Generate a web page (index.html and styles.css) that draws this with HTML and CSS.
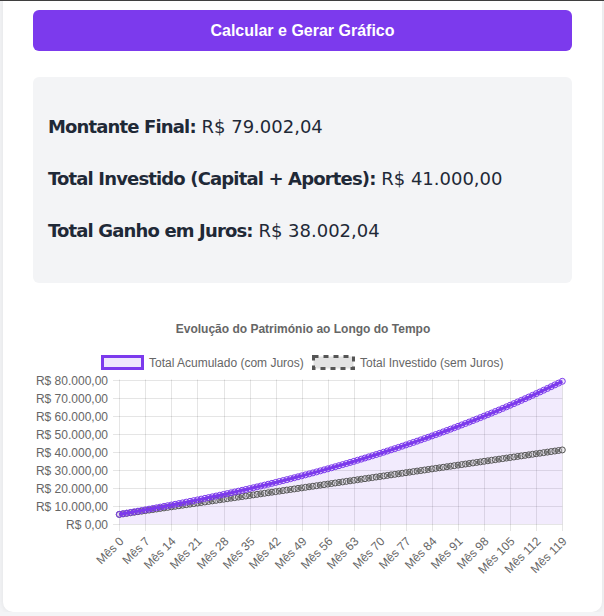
FILE: index.html
```html
<!DOCTYPE html>
<html lang="pt">
<head>
  <meta charset="UTF-8">
  <title>Simulador de Juros Compostos</title>
  <link rel="stylesheet" href="styles.css">
</head>
<body>
  <div id="container">
    <!-- Botão principal -->
    <button id="calc-button">Calcular e Gerar Gráfico</button>

    <!-- Resultados -->
    <div class="results">
      <p><strong>Montante Final:</strong> R$ 79.002,04</p>
      <p><strong>Total Investido (Capital + Aportes):</strong> R$ 41.000,00</p>
      <p><strong>Total Ganho em Juros:</strong> R$ 38.002,04</p>
    </div>

    <!-- Gráfico -->
    <div class="chart-box">
      <svg id="chart" width="540" height="300" viewBox="33 300 540 300"></svg>
    </div>
  </div>

  <script>
    (function () {
      const NS = 'http://www.w3.org/2000/svg';
      const svg = document.getElementById('chart');

      // mesma simulação que gerou os valores acima
      const capital = 5000, aporte = 300, taxa = 0.009, meses = 120;
      const acumulado = [], investido = [];
      let acc = capital, inv = capital;
      for (let i = 0; i < meses; i++) {
        acc = acc * (1 + taxa) + aporte;
        inv += aporte;
        acumulado.push(acc);
        investido.push(inv);
      }

      // área do gráfico
      const plotLeft = 119.3, plotRight = 562.3, plotTop = 379.5, plotBottom = 524;
      const maxY = 80000;
      const X = i => plotLeft + i * (plotRight - plotLeft) / (meses - 1);
      const Y = v => plotBottom - v * (plotBottom - plotTop) / maxY;

      function el(tag, attrs, text) {
        const node = document.createElementNS(NS, tag);
        for (const k in attrs) node.setAttribute(k, attrs[k]);
        if (text) node.textContent = text;
        svg.appendChild(node);
        return node;
      }

      const fmt = v => 'R$ ' + v.toLocaleString('pt-BR', { minimumFractionDigits: 2 });

      // título e legenda
      el('text', { x: 303, y: 333, class: 'chart-title', 'text-anchor': 'middle' },
         'Evolução do Património ao Longo do Tempo');
      el('rect', { x: 102.5, y: 356.5, width: 40, height: 12, class: 'legend-acc' });
      el('text', { x: 149, y: 366.5, class: 'chart-label' }, 'Total Acumulado (com Juros)');
      el('rect', { x: 313.5, y: 356.5, width: 40, height: 12, class: 'legend-inv' });
      el('text', { x: 360, y: 366.5, class: 'chart-label' }, 'Total Investido (sem Juros)');

      // grade horizontal + rótulos do eixo Y
      for (let v = 0; v <= maxY; v += 10000) {
        const y = Math.round(Y(v)) + 0.5;
        el('line', { x1: 113, x2: plotRight, y1: y, y2: y, class: 'grid' });
        el('text', { x: 108, y: y + 4, class: 'chart-label', 'text-anchor': 'end' },
           fmt(v).replace(/\u00a0/g, ' '));
      }

      // grade vertical + rótulos do eixo X
      for (let i = 0; i < meses; i += 7) {
        const x = Math.round(X(i)) + 0.5;
        el('line', { x1: x, x2: x, y1: plotTop, y2: 531, class: 'grid' });
        el('text', {
          class: 'chart-label', 'text-anchor': 'end', dy: '0.35em',
          transform: `translate(${x + 2}, 539) rotate(-45)`
        }, 'Mês ' + i);
      }

      // área preenchida sob o total acumulado
      const accPts = acumulado.map((v, i) => `${X(i).toFixed(2)},${Y(v).toFixed(2)}`);
      el('polygon', {
        points: accPts.join(' ') + ` ${plotRight},${plotBottom} ${plotLeft},${plotBottom}`,
        class: 'area-acc'
      });

      // total investido (tracejado)
      const invPts = investido.map((v, i) => `${X(i).toFixed(2)},${Y(v).toFixed(2)}`);
      el('polyline', { points: invPts.join(' '), class: 'line-inv' });
      investido.forEach((v, i) => el('circle', { cx: X(i), cy: Y(v), r: 3, class: 'pt-inv' }));

      // total acumulado
      el('polyline', { points: accPts.join(' '), class: 'line-acc' });
      acumulado.forEach((v, i) => el('circle', { cx: X(i), cy: Y(v), r: 3, class: 'pt-acc' }));
    })();
  </script>
</body>
</html>
```

FILE: styles.css
```css
:root {
  --primary-color: #7c3aed;   /* Roxo */
  --page-bg: #f3f4f6;
  --box-bg: #f3f4f6;
  --text-color: #1f2937;
  --chart-text: #666;
}

body {
  margin: 0 0 4px 0;
  padding: 0;
  background: var(--page-bg);
  border-top: 1px solid #3f3f3f;
  font-family: "DejaVu Sans", sans-serif;
}

/* Cartão branco principal */
#container {
  margin: 0 2px 0 3px;
  padding: 9px 30px 12px;
  background: #fff;
  border-radius: 0 0 10px 10px;
  box-shadow: 0 0 6px rgba(0,0,0,0.08);
}

#calc-button {
  display: block;
  width: 100%;
  height: 41px;
  padding: 0;
  border: none;
  border-radius: 6px;
  background: var(--primary-color);
  color: #fff;
  font-family: "Liberation Sans", Arial, sans-serif;
  font-size: 16px;
  font-weight: bold;
  cursor: pointer;
}

/* Caixa de resultados */
.results {
  margin-top: 26px;
  padding: 38px 15px 40px;
  background: var(--box-bg);
  border-radius: 6px;
  display: flex;
  flex-direction: column;
  gap: 28px;
}
.results p {
  margin: 0;
  font-size: 18px;
  line-height: 24px;
  color: var(--text-color);
  white-space: nowrap;
}
.results strong {
  letter-spacing: -0.85px;
}

/* Gráfico */
.chart-box {
  margin-top: 17px;
  height: 300px;
}
#chart {
  display: block;
}
.chart-title {
  font-family: "Liberation Sans", Arial, sans-serif;
  font-size: 12px;
  font-weight: bold;
  fill: var(--chart-text);
}
.chart-label {
  font-family: "Liberation Sans", Arial, sans-serif;
  font-size: 12px;
  fill: var(--chart-text);
}
.grid {
  stroke: rgba(0,0,0,0.1);
  stroke-width: 1;
}
.legend-acc {
  fill: rgba(124,58,237,0.12);
  stroke: var(--primary-color);
  stroke-width: 3;
}
.legend-inv {
  fill: #e2e2e2;
  stroke: #555;
  stroke-width: 3;
  stroke-dasharray: 5 5;
}
.area-acc {
  fill: rgba(124,58,237,0.1);
}
.line-acc {
  fill: none;
  stroke: var(--primary-color);
  stroke-width: 3;
}
.pt-acc {
  fill: rgba(124,58,237,0.1);
  stroke: var(--primary-color);
  stroke-width: 1;
}
.line-inv {
  fill: none;
  stroke: #555;
  stroke-width: 3;
  stroke-dasharray: 5 5;
}
.pt-inv {
  fill: rgba(200,200,200,0.3);
  stroke: #555;
  stroke-width: 1;
}
```
